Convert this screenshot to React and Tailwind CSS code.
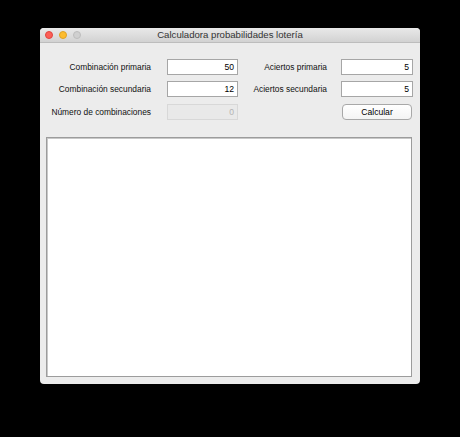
import React from "react";

const font = { fontFamily: '"Liberation Sans", Arial, sans-serif' };

function Field({ value, disabled }) {
  return (
    <div
      className={
        "h-[16px] flex items-center justify-end pr-[3px] text-[8.6px] border " +
        (disabled
          ? "bg-[#e9e9e9] border-[#d8d8d8] text-[#b3b3b3]"
          : "bg-white border-[#a6a6a6] text-black")
      }
    >
      {value}
    </div>
  );
}

export default function App() {
  return (
    <div className="w-[460px] h-[437px] bg-black pt-[28px] pl-[40px]" style={font}>
      {/* window */}
      <div className="w-[380px] h-[356px] bg-[#ececec] rounded-[4px] overflow-hidden flex flex-col">
        {/* title bar */}
        <div className="relative h-[15px] shrink-0 bg-gradient-to-b from-[#e9e9e9] to-[#d2d2d2] border-b border-[#bdbdbd] flex items-center pl-[5px] gap-[6px]">
          <span className="w-[8px] h-[8px] rounded-full bg-[#fc5f57] border border-[#e0443e]" />
          <span className="w-[8px] h-[8px] rounded-full bg-[#fdbc2e] border border-[#dea123]" />
          <span className="w-[8px] h-[8px] rounded-full bg-[#d0d0d0] border border-[#bcbcbc]" />
          <div className="absolute inset-0 flex items-center justify-center text-[9.6px] text-[#333] pt-[1px]">
            Calculadora probabilidades lotería
          </div>
        </div>

        {/* form */}
        <div className="pt-[16px] flex flex-col gap-[6px] text-[8.4px] text-[#111]">
          <div className="flex items-center">
            <div className="w-[111px] text-right">Combinación primaria</div>
            <div className="w-[71px] ml-[16px]"><Field value="50" /></div>
            <div className="w-[89px] text-right">Aciertos primaria</div>
            <div className="w-[72px] ml-[14px]"><Field value="5" /></div>
          </div>
          <div className="flex items-center">
            <div className="w-[111px] text-right">Combinación secundaria</div>
            <div className="w-[71px] ml-[16px]"><Field value="12" /></div>
            <div className="w-[89px] text-right">Aciertos secundaria</div>
            <div className="w-[72px] ml-[14px]"><Field value="5" /></div>
          </div>
          <div className="flex items-center mt-[1px]">
            <div className="w-[111px] text-right">Número de combinaciones</div>
            <div className="w-[71px] ml-[16px]"><Field value="0" disabled /></div>
            <div className="w-[89px]" />
            <button className="w-[70px] ml-[15px] h-[16px] rounded-[4px] border border-[#a8a8a8] bg-gradient-to-b from-white to-[#f4f4f4] text-[8.6px] text-black leading-none">
              Calcular
            </button>
          </div>
        </div>

        {/* output area */}
        <div className="mt-[17px] ml-[6px] w-[366px] h-[240px] bg-white border border-[#9c9c9c] shadow-[inset_1px_1px_0_#c8c8c8]" />
      </div>
    </div>
  );
}
